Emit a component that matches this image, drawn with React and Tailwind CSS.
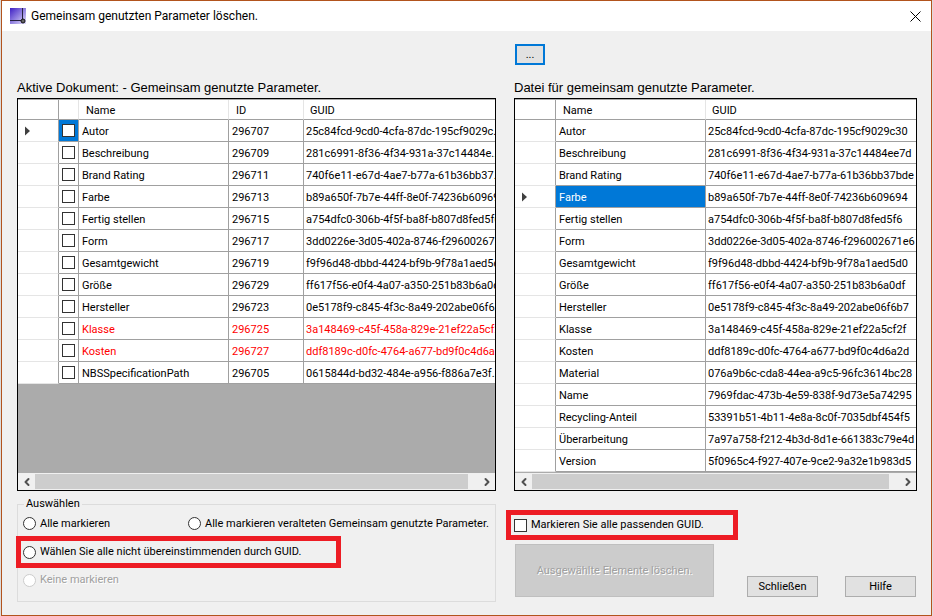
import { ChevronLeft, ChevronRight } from 'lucide-react';

const documentParameters = [
    { name: 'Autor', id: '296707', guid: '25c84fcd-9cd0-4cfa-87dc-195cf9029c...' },
    { name: 'Beschreibung', id: '296709', guid: '281c6991-8f36-4f34-931a-37c14484e...' },
    { name: 'Brand Rating', id: '296711', guid: '740f6e11-e67d-4ae7-b77a-61b36bb37...' },
    { name: 'Farbe', id: '296713', guid: 'b89a650f-7b7e-44ff-8e0f-74236b609694' },
    { name: 'Fertig stellen', id: '296715', guid: 'a754dfc0-306b-4f5f-ba8f-b807d8fed5f6' },
    { name: 'Form', id: '296717', guid: '3dd0226e-3d05-402a-8746-f29600267...' },
    { name: 'Gesamtgewicht', id: '296719', guid: 'f9f96d48-dbbd-4424-bf9b-9f78a1aed5d0' },
    { name: 'Größe', id: '296729', guid: 'ff617f56-e0f4-4a07-a350-251b83b6a0df' },
    { name: 'Hersteller', id: '296723', guid: '0e5178f9-c845-4f3c-8a49-202abe06f6...' },
    { name: 'Klasse', id: '296725', guid: '3a148469-c45f-458a-829e-21ef22a5cf2f', outdated: true },
    { name: 'Kosten', id: '296727', guid: 'ddf8189c-d0fc-4764-a677-bd9f0c4d6a...', outdated: true },
    { name: 'NBSSpecificationPath', id: '296705', guid: '0615844d-bd32-484e-a956-f886a7e3f...' },
];

const fileParameters = [
    { name: 'Autor', guid: '25c84fcd-9cd0-4cfa-87dc-195cf9029c30' },
    { name: 'Beschreibung', guid: '281c6991-8f36-4f34-931a-37c14484ee7d' },
    { name: 'Brand Rating', guid: '740f6e11-e67d-4ae7-b77a-61b36bb37bde' },
    { name: 'Farbe', guid: 'b89a650f-7b7e-44ff-8e0f-74236b609694' },
    { name: 'Fertig stellen', guid: 'a754dfc0-306b-4f5f-ba8f-b807d8fed5f6' },
    { name: 'Form', guid: '3dd0226e-3d05-402a-8746-f296002671e6' },
    { name: 'Gesamtgewicht', guid: 'f9f96d48-dbbd-4424-bf9b-9f78a1aed5d0' },
    { name: 'Größe', guid: 'ff617f56-e0f4-4a07-a350-251b83b6a0df' },
    { name: 'Hersteller', guid: '0e5178f9-c845-4f3c-8a49-202abe06f6b7' },
    { name: 'Klasse', guid: '3a148469-c45f-458a-829e-21ef22a5cf2f' },
    { name: 'Kosten', guid: 'ddf8189c-d0fc-4764-a677-bd9f0c4d6a2d' },
    { name: 'Material', guid: '076a9b6c-cda8-44ea-a9c5-96fc3614bc28' },
    { name: 'Name', guid: '7969fdac-473b-4e59-838f-9d73e5a74295' },
    { name: 'Recycling-Anteil', guid: '53391b51-4b11-4e8a-8c0f-7035dbf454f5' },
    { name: 'Überarbeitung', guid: '7a97a758-f212-4b3d-8d1e-661383c79e4d' },
    { name: 'Version', guid: '5f0965c4-f927-407e-9ce2-9a32e1b983d5' },
];

const rowHead = 'h-[22px] border-r border-b border-r-[#a0a0a0] border-b-[#e5e5e5] bg-white p-0 pl-[7px]';
const checkCell = 'h-[22px] border-r border-b border-[#a0a0a0] p-0 pl-[3px]';
const cell = 'h-[22px] overflow-hidden border-r border-b border-[#a0a0a0] p-0 pt-[2px] pl-[3px]';
const lastCell = 'h-[22px] overflow-hidden border-b border-[#a0a0a0] p-0 pt-[2px] pl-[2px]';
const headCell = 'h-5 border-r border-b border-r-[#e5e5e5] border-b-[#a0a0a0] p-0 pt-[2px] pl-[7px] text-left font-normal';
const lastHeadCell = 'h-5 border-b border-[#a0a0a0] p-0 pt-[2px] pl-[6px] text-left font-normal';
const headCorner = 'h-5 border-r border-b border-[#a0a0a0] p-0';
const box = 'block size-[13px] shrink-0 appearance-none border border-[#333] bg-white';
const radio = 'block size-[13px] shrink-0 appearance-none rounded-full border border-[#333] bg-white disabled:border-[#ccc]';
const button = 'border border-[#adadad] bg-[#e1e1e1]';

function AppIcon() {
    return (
        <svg className="size-4" viewBox="0 0 16 16" aria-hidden="true">
            <defs>
                <linearGradient id="tile" x1="0" y1="0" x2="1" y2="1">
                    <stop offset="0" stopColor="#3d1fc4" />
                    <stop offset="1" stopColor="#e4e0fb" />
                </linearGradient>
            </defs>
            <rect width="16" height="16" fill="url(#tile)" />
            <path d="M0 12.5H11M12.5 0V11" stroke="#26213f" fill="none" />
            <circle cx="13" cy="13" r="2" fill="#666" stroke="#111" />
        </svg>
    );
}

function Marker() {
    return (
        <svg className="h-[10px] w-[6px]" viewBox="0 0 6 10" aria-hidden="true">
            <path d="M0 0.5L5 5L0 9.5Z" fill="#404040" />
        </svg>
    );
}

function ScrollBar() {
    return (
        <div className="flex h-[17px] bg-[#f0f0f0] text-[#505050]">
            <button type="button" aria-label="Nach links" className="flex w-[17px] items-center justify-center">
                <ChevronLeft size={12} strokeWidth={4} />
            </button>
            <div className="flex-1 py-px pr-[10px]">
                <div className="h-full bg-[#cdcdcd]" />
            </div>
            <button type="button" aria-label="Nach rechts" className="flex w-[17px] items-center justify-center">
                <ChevronRight size={12} strokeWidth={4} />
            </button>
        </div>
    );
}

function GridFrame({ children }) {
    return (
        <div className="flex min-w-0 flex-col border border-black">
            <div className="flex-1 overflow-hidden bg-[#ababab] py-px">
                {children}
            </div>
            <ScrollBar />
        </div>
    );
}

function DocumentTable() {
    return (
        <table className="w-full table-fixed border-separate border-spacing-0 bg-white whitespace-nowrap">
            <colgroup>
                <col className="w-[41px]" />
                <col className="w-[20px]" />
                <col className="w-[150px]" />
                <col className="w-[75px]" />
                <col />
            </colgroup>
            <thead>
                <tr>
                    <th className={headCorner} />
                    <th className={headCell} />
                    <th className={headCell}>Name</th>
                    <th className={headCell}>ID</th>
                    <th className={lastHeadCell}>GUID</th>
                </tr>
            </thead>
            <tbody>
                {documentParameters.map((row, index) => (
                    <tr key={row.id} className={row.outdated ? 'text-[#ff0000]' : ''}>
                        <td className={rowHead}>{index === 0 && <Marker />}</td>
                        <td className={`${checkCell} ${index === 0 ? 'bg-[#0078d7]' : ''}`}>
                            <input type="checkbox" aria-label={row.name} className={box} />
                        </td>
                        <td className={cell}>{row.name}</td>
                        <td className={cell}>{row.id}</td>
                        <td className={lastCell}>{row.guid}</td>
                    </tr>
                ))}
            </tbody>
        </table>
    );
}

function FileTable() {
    return (
        <table className="w-full table-fixed border-separate border-spacing-0 bg-white whitespace-nowrap">
            <colgroup>
                <col className="w-[41px]" />
                <col className="w-[150px]" />
                <col />
            </colgroup>
            <thead>
                <tr>
                    <th className={headCorner} />
                    <th className={headCell}>Name</th>
                    <th className={lastHeadCell}>GUID</th>
                </tr>
            </thead>
            <tbody>
                {fileParameters.map((row) => {
                    const selected = row.name === 'Farbe';
                    return (
                        <tr key={row.name}>
                            <td className={rowHead}>{selected && <Marker />}</td>
                            <td className={`${cell} ${selected ? 'bg-[#0078d7] text-white' : ''}`}>{row.name}</td>
                            <td className={lastCell}>{row.guid}</td>
                        </tr>
                    );
                })}
            </tbody>
        </table>
    );
}

function SelectionGroup() {
    return (
        <fieldset className="mt-[6px] h-[105px] min-w-0 border border-[#dcdcdc]">
            <legend className="ml-[6px] px-[2px] leading-[14px]">Auswählen</legend>
            <div className="flex h-[25px] items-center pl-[5px] whitespace-nowrap">
                <label className="flex w-[165px] items-center gap-1">
                    <input type="radio" name="selection" className={radio} />
                    Alle markieren
                </label>
                <label className="flex items-center gap-1">
                    <input type="radio" name="selection" className={radio} />
                    Alle markieren veralteten Gemeinsam genutzte Parameter.
                </label>
            </div>
            <label className="-ml-[2px] flex h-8 w-[325px] items-center gap-1 border-5 border-[#ed1c24] pl-[2px] whitespace-nowrap">
                <input type="radio" name="selection" className={radio} />
                Wählen Sie alle nicht übereinstimmenden durch GUID.
            </label>
            <label className="flex h-6 items-center gap-1 pl-[5px] text-[#a0a0a0] [text-shadow:1px_1px_0_#fff]">
                <input type="radio" name="selection" disabled className={radio} />
                Keine markieren
            </label>
        </fieldset>
    );
}

function Actions() {
    return (
        <div className="mt-[19px]">
            <label className="-ml-2 flex h-[30px] w-[232px] items-center gap-1 border-5 border-[#ed1c24] pl-[3px] whitespace-nowrap">
                <input type="checkbox" className={box} />
                Markieren Sie alle passenden GUID.
            </label>
            <div className="mt-1 flex items-end px-px">
                <button
                    type="button"
                    disabled
                    className="mr-auto h-[53px] w-[199px] border border-[#bfbfbf] bg-[#ccc] text-[#a0a0a0] [text-shadow:1px_1px_0_#fff]"
                >
                    Ausgewählte Elemente löschen.
                </button>
                <button type="button" className={`${button} mr-[27px] h-[21px] w-[71px]`}>Schließen</button>
                <button type="button" className={`${button} h-[21px] w-[71px]`}>Hilfe</button>
            </div>
        </div>
    );
}

export default function App() {
    return (
        <div className="min-h-screen bg-[#dcdcdc] pr-px pl-px">
            <div className="flex min-h-screen flex-col border border-[#b2531d] bg-[#f0f0f0] font-['Roboto','Liberation_Sans',sans-serif] text-[11px] leading-4 text-black">
                <header className="flex h-[30px] items-center bg-white pr-[10px] pl-2">
                    <AppIcon />
                    <h1 className="ml-[5px] flex-1 text-[12px]">
                        Gemeinsam genutzten Parameter löschen.
                    </h1>
                    <button type="button" aria-label="Fenster schließen">
                        <svg className="size-[11px]" viewBox="0 0 11 11" aria-hidden="true">
                            <path d="M0.5 0.5L10.5 10.5M10.5 0.5L0.5 10.5" stroke="#000" fill="none" />
                        </svg>
                    </button>
                </header>
                <main className="grid grid-cols-[479fr_403fr] gap-x-[18px] pt-[13px] pr-[14px] pl-[15px]">
                    <button
                        type="button"
                        aria-label="Datei wählen"
                        className="col-start-2 ml-px h-[21px] w-[30px] border-2 border-[#0078d7] bg-[#e1e1e1] leading-4"
                    >
                        ...
                    </button>
                    <h2 className="col-start-1 mt-[14px] mb-px font-['Liberation_Sans',sans-serif] text-[13px] leading-[18px] whitespace-nowrap">
                        Aktive Dokument: - Gemeinsam genutzte Parameter.
                    </h2>
                    <h2 className="mt-[14px] mb-px font-['Liberation_Sans',sans-serif] text-[13px] leading-[18px] whitespace-nowrap">
                        Datei für gemeinsam genutzte Parameter.
                    </h2>
                    <GridFrame>
                        <DocumentTable />
                    </GridFrame>
                    <GridFrame>
                        <FileTable />
                    </GridFrame>
                    <SelectionGroup />
                    <Actions />
                </main>
            </div>
        </div>
    );
}
